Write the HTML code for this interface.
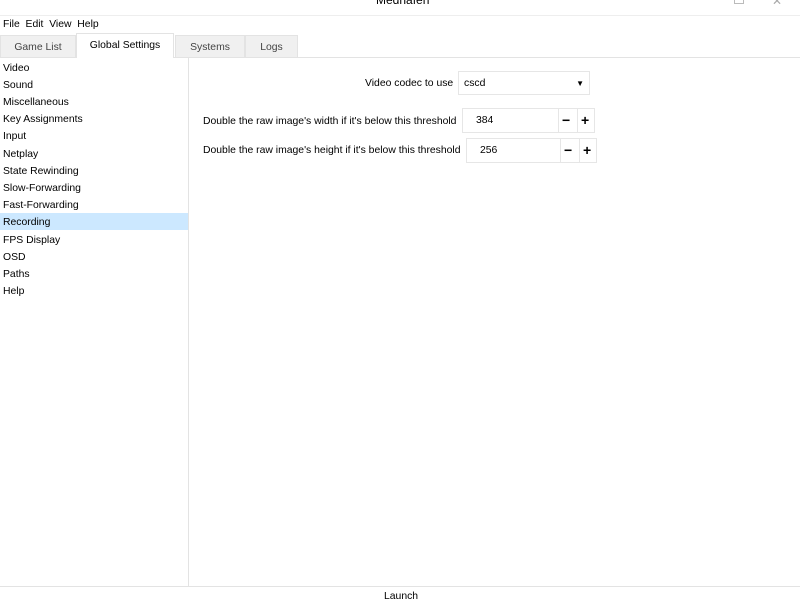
<!DOCTYPE html>
<html><head><style>
body{margin:0;width:800px;height:600px;background:#fff;font-family:"Liberation Sans",sans-serif;font-size:10.4px;color:#000;position:relative;overflow:hidden}
.a{position:absolute;white-space:nowrap}
.tab{position:absolute;top:35px;height:22px;background:#f0f0f0;border:1px solid #e3e3e3;border-bottom:none;color:#444;text-align:center;line-height:23px;box-sizing:border-box}
.li{position:absolute;left:0;width:188px;height:17px;line-height:19px;padding-left:3px;box-sizing:border-box}
.box{position:absolute;border:1px solid #e6e6e6;box-sizing:border-box;height:24px;line-height:23px;background:#fff}
</style></head><body>
<div class="a" style="left:376px;top:-7px;font-size:12px">Mednafen</div>
<div class="a" style="left:734px;top:-4px;width:8px;height:6px;border:1px solid #bbb"></div>
<div class="a" style="left:772px;top:-6px;color:#aaa;font-size:12px">✕</div>
<div class="a" style="left:0;top:15px;width:800px;height:1px;background:#eee"></div>
<div class="a" style="left:3px;top:19px">File&nbsp; Edit&nbsp; View&nbsp; Help</div>
<div class="a" style="left:0;top:57px;width:800px;height:1px;background:#e3e3e3"></div>
<div class="tab" style="left:0;width:76px">Game List</div>
<div class="tab" style="left:76px;width:98px;top:33px;height:25px;background:#fff;color:#000">Global Settings</div>
<div class="tab" style="left:175px;width:70px">Systems</div>
<div class="tab" style="left:245px;width:53px">Logs</div>
<div class="a" style="left:188px;top:58px;width:1px;height:528px;background:#e3e3e3"></div>
<div class="li" style="top:59px">Video</div>
<div class="li" style="top:76px">Sound</div>
<div class="li" style="top:93px">Miscellaneous</div>
<div class="li" style="top:110px">Key Assignments</div>
<div class="li" style="top:127px">Input</div>
<div class="li" style="top:145px">Netplay</div>
<div class="li" style="top:162px">State Rewinding</div>
<div class="li" style="top:179px">Slow-Forwarding</div>
<div class="li" style="top:196px">Fast-Forwarding</div>
<div class="li" style="top:213px;background:#cce8ff">Recording</div>
<div class="li" style="top:231px">FPS Display</div>
<div class="li" style="top:248px">OSD</div>
<div class="li" style="top:265px">Paths</div>
<div class="li" style="top:282px">Help</div>
<div class="a" style="left:365px;top:78px">Video codec to use</div>
<div class="box" style="left:458px;top:71px;width:132px;padding-left:5px">cscd<span style="position:absolute;right:5px;top:0;font-size:8px">▼</span></div>
<div class="a" style="left:203px;top:116px">Double the raw image's width if it's below this threshold</div>
<div class="box" style="left:462px;top:108px;width:133px;height:25px;padding-left:13px">384
<span style="position:absolute;left:95px;top:0;width:1px;height:23px;background:#e6e6e6"></span>
<span style="position:absolute;left:114px;top:0;width:1px;height:23px;background:#e6e6e6"></span>
<b style="position:absolute;left:99px;top:0;font-size:14px">−</b><b style="position:absolute;left:118px;top:0;font-size:14px">+</b></div>
<div class="a" style="left:203px;top:145px">Double the raw image's height if it's below this threshold</div>
<div class="box" style="left:466px;top:138px;width:131px;height:25px;padding-left:13px">256
<span style="position:absolute;left:93px;top:0;width:1px;height:23px;background:#e6e6e6"></span>
<span style="position:absolute;left:112px;top:0;width:1px;height:23px;background:#e6e6e6"></span>
<b style="position:absolute;left:97px;top:0;font-size:14px">−</b><b style="position:absolute;left:116px;top:0;font-size:14px">+</b></div>
<div class="a" style="left:0;top:586px;width:800px;height:1px;background:#e3e3e3"></div>
<div class="a" style="left:384px;top:591px">Launch</div>
</body></html>
